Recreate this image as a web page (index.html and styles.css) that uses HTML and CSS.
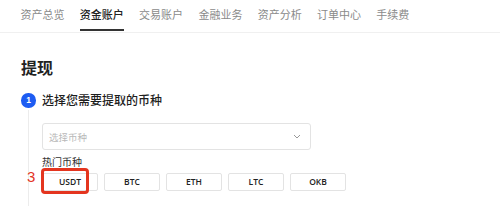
FILE: index.html
```html
<!DOCTYPE html>
<html lang="zh">
<head>
<meta charset="utf-8">
<link rel="stylesheet" href="styles.css">
</head>
<body>
<nav class="tabs">
  <span class="tab">资产总览</span>
  <span class="tab active">资金账户</span>
  <span class="tab">交易账户</span>
  <span class="tab">金融业务</span>
  <span class="tab">资产分析</span>
  <span class="tab">订单中心</span>
  <span class="tab">手续费</span>
</nav>
<main class="page">
  <h1 class="title">提现</h1>
  <section class="step">
    <div class="step-rail">
      <span class="step-num">1</span>
      <span class="step-line"></span>
    </div>
    <div class="step-body">
      <div class="step-title">选择您需要提取的币种</div>
      <div class="select">
        <span class="placeholder">选择币种</span>
        <svg class="chevron" width="8" height="5" viewBox="0 0 8 5"><path d="M1 1l3 3 3-3" fill="none" stroke="#999" stroke-width="1"/></svg>
      </div>
      <div class="hot-label">热门币种</div>
      <div class="coins">
        <span class="coin">USDT</span>
        <span class="coin">BTC</span>
        <span class="coin">ETH</span>
        <span class="coin">LTC</span>
        <span class="coin">OKB</span>
      </div>
    </div>
  </section>
  <span class="mark-num">3</span>
  <span class="mark-box"></span>
</main>
</body>
</html>
```

FILE: styles.css
```css
* { box-sizing: border-box; }
html, body { margin: 0; padding: 0; background: #fff; }
body {
  width: 500px;
  height: 206px;
  overflow: hidden;
  font-family: "Noto Sans CJK SC", "Noto Sans", sans-serif;
  color: #222;
  position: relative;
}
.tabs {
  display: flex;
  align-items: flex-start;
  gap: 15.3px;
  height: 33px;
  padding-left: 20.5px;
  border-bottom: 1px solid #f0f0f0;
}
.tab {
  font-size: 11px;
  line-height: 16px;
  height: 31px;
  padding-top: 6px;
  color: #8a8a8a;
  border-bottom: 2px solid transparent;
  white-space: nowrap;
}
.tab.active {
  color: #222;
  font-weight: 500;
  border-bottom-color: #333;
}
.page {
  padding-left: 21px;
}
.title {
  margin: 23px 0 0;
  font-size: 16px;
  line-height: 22px;
  font-weight: 700;
  color: #222;
}
.step {
  display: flex;
  gap: 6px;
  margin-top: 14px;
}
.step-rail {
  width: 15px;
  display: flex;
  flex-direction: column;
  align-items: center;
}
.step-num {
  width: 14.5px;
  height: 14.5px;
  flex: none;
  margin-top: 1px;
  border-radius: 50%;
  background: #1d5cf2;
  color: #fff;
  font-size: 8.5px;
  font-weight: 700;
  line-height: 14.5px;
  text-align: center;
  font-family: "Liberation Sans", sans-serif;
}
.step-line {
  width: 1px;
  height: 100px;
  margin-top: 2px;
  background: #ececec;
}
.step-body {
  flex: 1;
}
.step-title {
  font-size: 12px;
  line-height: 16px;
  font-weight: 500;
  color: #1e1e1e;
}
.select {
  width: 269px;
  height: 27px;
  margin-top: 15px;
  border: 1px solid #e3e3e3;
  border-radius: 3px;
  display: flex;
  align-items: center;
  justify-content: space-between;
  padding: 0 9px 0 6px;
}
.placeholder {
  font-size: 9.5px;
  color: #b9b9b9;
}
.hot-label {
  margin-top: 5px;
  font-size: 10px;
  line-height: 14px;
  color: #333;
}
.coins {
  display: flex;
  gap: 6px;
  margin-top: 4px;
}
.coin {
  width: 56px;
  height: 18px;
  border: 1px solid #e3e3e3;
  border-radius: 2px;
  font-family: "Open Sans", "Liberation Sans", sans-serif;
  font-size: 8.5px;
  font-weight: 600;
  line-height: 16px;
  text-align: center;
  color: #222;
}
.mark-num {
  position: absolute;
  left: 27px;
  top: 168px;
  font-family: "Liberation Sans", sans-serif;
  font-size: 15px;
  line-height: 18px;
  color: #e4351f;
}
.mark-box {
  position: absolute;
  left: 41px;
  top: 168px;
  width: 48px;
  height: 26px;
  border: 3px solid #e4351f;
  border-radius: 4px;
}
```
